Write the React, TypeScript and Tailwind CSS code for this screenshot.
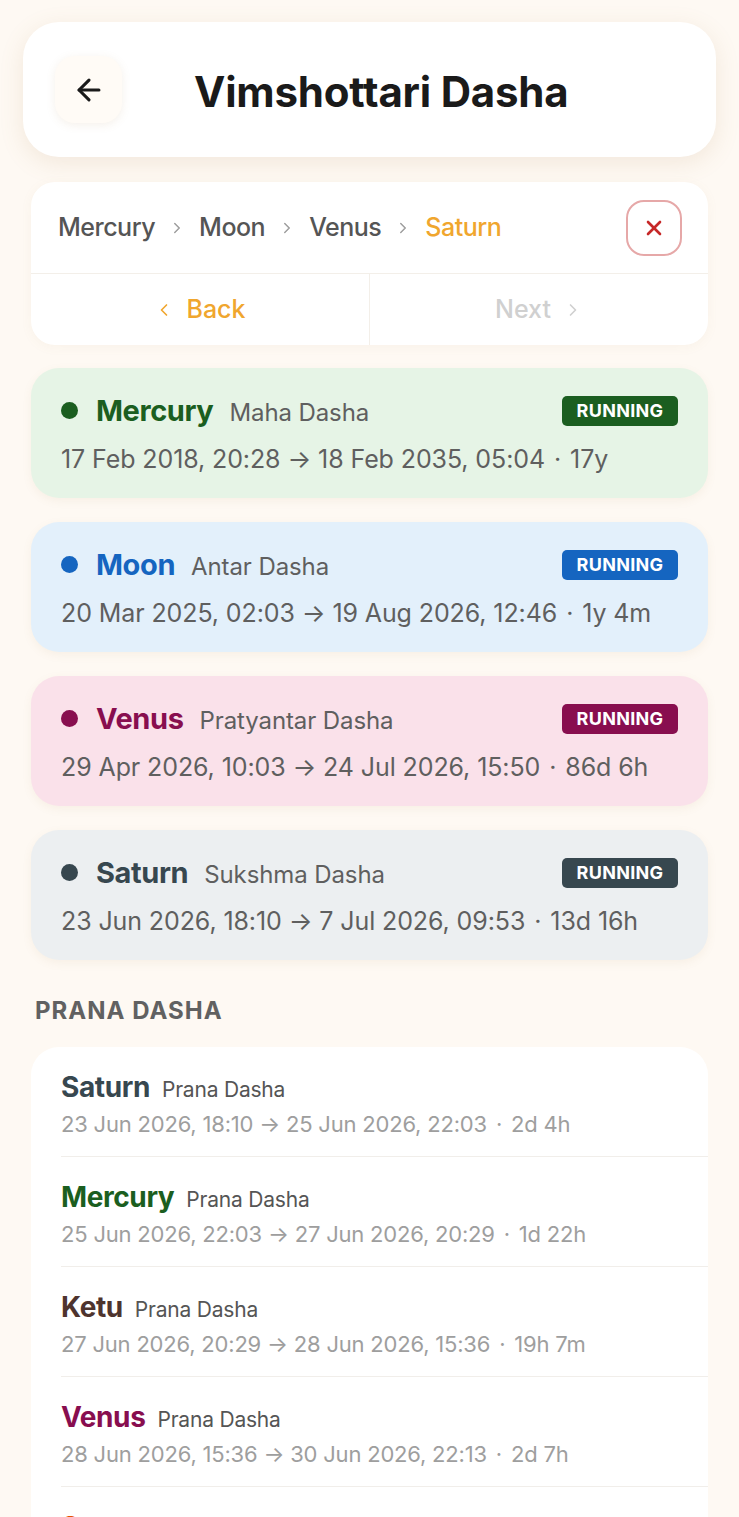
import { ArrowLeft, ChevronLeft, ChevronRight, X } from "lucide-react";

const font = { fontFamily: "Inter, 'Noto Sans', sans-serif" };

// current running periods
const running = [
  {
    name: "Mercury",
    level: "Maha Dasha",
    range: "17 Feb 2018, 20:28 → 18 Feb 2035, 05:04",
    dur: "17y",
    bg: "bg-[#e6f4e6]",
    fg: "text-[#1b5e20]",
    dot: "bg-[#1b5e20]",
  },
  {
    name: "Moon",
    level: "Antar Dasha",
    range: "20 Mar 2025, 02:03 → 19 Aug 2026, 12:46",
    dur: "1y 4m",
    bg: "bg-[#e3f0fb]",
    fg: "text-[#1565c0]",
    dot: "bg-[#1565c0]",
  },
  {
    name: "Venus",
    level: "Pratyantar Dasha",
    range: "29 Apr 2026, 10:03 → 24 Jul 2026, 15:50",
    dur: "86d 6h",
    bg: "bg-[#fae1ea]",
    fg: "text-[#880e4f]",
    dot: "bg-[#880e4f]",
  },
  {
    name: "Saturn",
    level: "Sukshma Dasha",
    range: "23 Jun 2026, 18:10 → 7 Jul 2026, 09:53",
    dur: "13d 16h",
    bg: "bg-[#eceff1]",
    fg: "text-[#37474f]",
    dot: "bg-[#37474f]",
  },
];

const prana = [
  { name: "Saturn", fg: "text-[#37474f]", range: "23 Jun 2026, 18:10 → 25 Jun 2026, 22:03", dur: "2d 4h" },
  { name: "Mercury", fg: "text-[#1b5e20]", range: "25 Jun 2026, 22:03 → 27 Jun 2026, 20:29", dur: "1d 22h" },
  { name: "Ketu", fg: "text-[#4e342e]", range: "27 Jun 2026, 20:29 → 28 Jun 2026, 15:36", dur: "19h 7m" },
  { name: "Venus", fg: "text-[#880e4f]", range: "28 Jun 2026, 15:36 → 30 Jun 2026, 22:13", dur: "2d 7h" },
  { name: "Sun", fg: "text-[#e65100]", range: "30 Jun 2026, 22:13 → 3 Jul 2026, 00:52", dur: "2d 2h" },
];

export default function App() {
  return (
    <div style={font} className="min-h-[1517px] bg-[#fef9f3] px-[31px] pt-[22px] pb-10">
      {/* header */}
      <div className="-mx-2 flex h-[135px] items-center rounded-[36px] bg-white px-8 shadow-[0_6px_24px_rgba(170,130,80,0.14)]">
        <button className="flex h-[67px] w-[67px] items-center justify-center rounded-[20px] bg-[#fffbf6] shadow-[0_2px_10px_rgba(170,130,80,0.12)]">
          <ArrowLeft size={34} strokeWidth={2.2} className="text-[#1a1a1a]" />
        </button>
        <h1 className="ml-[72px] mt-[3px] text-[42px] font-bold tracking-[-0.2px] text-[#1a1a1a]">Vimshottari Dasha</h1>
      </div>

      {/* breadcrumb */}
      <div className="mt-[25px] overflow-hidden rounded-[24px] bg-white shadow-[0_2px_12px_rgba(170,130,80,0.06)]">
        <div className="flex h-[92px] items-center justify-between border-b border-[#f3efe9] pl-[27px] pr-[26px]">
          <div className="flex items-center gap-[13px] text-[25px] font-medium tracking-[-0.5px] text-[#555555]">
            <span>Mercury</span>
            <ChevronRight size={18} className="text-[#9e9e9e]" />
            <span>Moon</span>
            <ChevronRight size={18} className="text-[#9e9e9e]" />
            <span>Venus</span>
            <ChevronRight size={18} className="text-[#9e9e9e]" />
            <span className="text-[#f0a62e]">Saturn</span>
          </div>
          <button className="flex h-[56px] w-[56px] items-center justify-center rounded-[18px] border-2 border-[#e6a8a8]">
            <X size={24} strokeWidth={2.6} className="text-[#c62828]" />
          </button>
        </div>
        <div className="flex h-[71px]">
          <div className="flex flex-1 items-center justify-center gap-3 border-r border-[#f3efe9] text-[25px] font-medium text-[#f0a62e]">
            <ChevronLeft size={20} />
            <span>Back</span>
          </div>
          <div className="flex flex-1 items-center justify-center gap-3 text-[25px] font-medium text-[#d0d0d0]">
            <span>Next</span>
            <ChevronRight size={20} />
          </div>
        </div>
      </div>

      {/* running periods */}
      <div className="mt-[23px] flex flex-col gap-[24px]">
        {running.map((r) => (
          <div key={r.name} className={`h-[130px] rounded-[28px] px-[30px] pt-[21px] shadow-[0_3px_10px_rgba(170,130,80,0.08)] ${r.bg}`}>
            <div className="flex items-center justify-between">
              <div className="flex items-baseline">
                <span className={`mr-[18px] inline-block h-[17px] w-[17px] self-center rounded-full ${r.dot}`} />
                <span className={`text-[29px] font-bold tracking-[-0.4px] ${r.fg}`}>{r.name}</span>
                <span className="ml-[16px] text-[24px] tracking-[-0.1px] text-[#5f5f5f]">{r.level}</span>
              </div>
              <span className={`flex h-[30px] w-[116px] items-center justify-center rounded-[5px] text-[18px] font-bold tracking-[0.3px] text-white ${r.dot}`}>
                RUNNING
              </span>
            </div>
            <div className="mt-[8px] text-[25px] tracking-[-0.1px] text-[#5f5f5f]">
              {r.range}
              <span className="mx-[9px]">·</span>
              {r.dur}
            </div>
          </div>
        ))}
      </div>

      <h2 className="mt-[33px] pl-[4px] text-[24px] font-bold tracking-[1px] text-[#616161]">PRANA DASHA</h2>

      {/* prana list */}
      <div className="mt-[18px] overflow-hidden rounded-t-[28px] bg-white">
        {prana.map((p) => (
          <div key={p.name} className="pl-[30px]">
            <div className="h-[110px] border-b border-[#f1eeea] pt-[19px]">
              <div className="flex items-baseline gap-[12px]">
                <span className={`text-[28px] font-bold tracking-[-0.4px] ${p.fg}`}>{p.name}</span>
                <span className="text-[21px] tracking-[-0.2px] text-[#555555]">Prana Dasha</span>
              </div>
              <div className="text-[22px] tracking-[-0.2px] text-[#9e9e9e]">
                {p.range}
                <span className="mx-[9px]">·</span>
                {p.dur}
              </div>
            </div>
          </div>
        ))}
      </div>
    </div>
  );
}
